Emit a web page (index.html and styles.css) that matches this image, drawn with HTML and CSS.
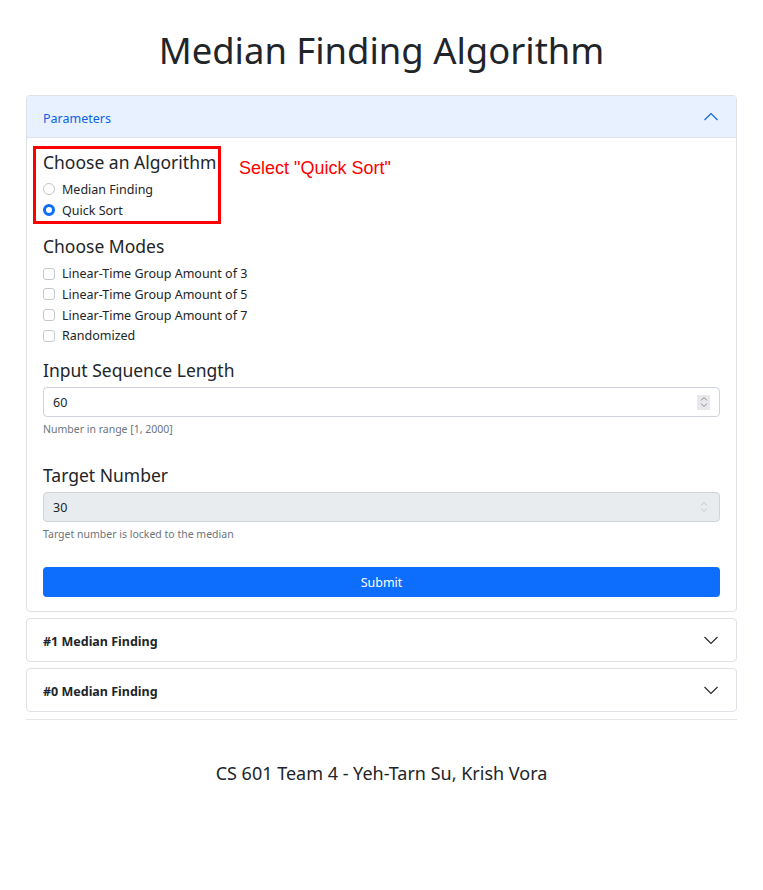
FILE: index.html
```html
<!DOCTYPE html>
<html lang="en">
<head>
<meta charset="utf-8">
<title>Median Finding Algorithm</title>
<link rel="stylesheet" href="styles.css">
</head>
<body>
<div class="container">
  <h1 class="title">Median Finding Algorithm</h1>

  <div class="acc-item">
    <div class="acc-header open">
      <span class="head-text">Parameters</span>
      <svg class="chev" width="16" height="16" viewBox="0 0 16 16"><path d="M1.5 11 L8 4.5 L14.5 11" fill="none" stroke="#0c63e4" stroke-width="1.1"/></svg>
    </div>
    <div class="acc-body">
      <div class="group highlight">
        <div class="group-title">Choose an Algorithm</div>
        <label class="check"><span class="radio"></span>Median Finding</label>
        <label class="check"><span class="radio on"></span>Quick Sort</label>
        <span class="note">Select "Quick Sort"</span>
      </div>

      <div class="group modes">
        <div class="group-title">Choose Modes</div>
        <label class="check"><span class="box"></span>Linear-Time Group Amount of 3</label>
        <label class="check"><span class="box"></span>Linear-Time Group Amount of 5</label>
        <label class="check"><span class="box"></span>Linear-Time Group Amount of 7</label>
        <label class="check"><span class="box"></span>Randomized</label>
      </div>

      <div class="group field">
        <div class="group-title">Input Sequence Length</div>
        <div class="input">
          <span>60</span>
          <span class="spin active"><svg width="8" height="12" viewBox="0 0 8 12"><path d="M1 4.5 L4 1.5 L7 4.5 M1 7.5 L4 10.5 L7 7.5" fill="none" stroke="#8a8a8a" stroke-width="1"/></svg></span>
        </div>
        <div class="help">Number in range [1, 2000]</div>
      </div>

      <div class="group field">
        <div class="group-title">Target Number</div>
        <div class="input disabled">
          <span>30</span>
          <span class="spin"><svg width="8" height="12" viewBox="0 0 8 12"><path d="M1 4.5 L4 1.5 L7 4.5 M1 7.5 L4 10.5 L7 7.5" fill="none" stroke="#c4c6c9" stroke-width="1"/></svg></span>
        </div>
        <div class="help">Target number is locked to the median</div>
      </div>

      <button class="submit" type="button">Submit</button>
    </div>
  </div>

  <div class="acc-item">
    <div class="acc-header">
      <span class="head-text bold">#1 Median Finding</span>
      <svg class="chev" width="16" height="16" viewBox="0 0 16 16"><path d="M1.5 5 L8 11.5 L14.5 5" fill="none" stroke="#212529" stroke-width="1.1"/></svg>
    </div>
  </div>

  <div class="acc-item">
    <div class="acc-header">
      <span class="head-text bold">#0 Median Finding</span>
      <svg class="chev" width="16" height="16" viewBox="0 0 16 16"><path d="M1.5 5 L8 11.5 L14.5 5" fill="none" stroke="#212529" stroke-width="1.1"/></svg>
    </div>
  </div>

  <div class="rule"></div>

  <footer class="footer">CS 601 Team 4 - Yeh-Tarn Su, Krish Vora</footer>
</div>
</body>
</html>
```

FILE: styles.css
```css
*, *::before, *::after { box-sizing: border-box; }
body {
  margin: 0;
  font-family: "Segoe UI", "Noto Sans", sans-serif;
  color: #212529;
  background: #fff;
}
.container { padding: 0 26px; }
.title {
  margin: 26px 0 21px;
  text-align: center;
  font-weight: 400;
  font-size: 36.4px;
  line-height: 48px;
}
.acc-item {
  border: 1px solid #dee2e6;
  border-radius: 4px;
  margin-bottom: 6px;
  overflow: hidden;
}
.acc-header {
  height: 42px;
  padding: 0 16px;
  display: flex;
  align-items: center;
  justify-content: space-between;
  font-size: 12.5px;
}
.head-text { padding-top: 3px; }
.acc-header.open {
  background: #e7f1ff;
  color: #0c63e4;
  border-bottom: 1px solid #dee2e6;
}
.acc-header .bold { font-weight: 700; }
.chev { margin-right: 1px; }
.acc-body { padding: 13px 16px 14px; }
.group { margin-bottom: 15px; }
.group.modes { margin-bottom: 13px; }
.group.highlight { position: relative; }
.group.highlight::after {
  content: "";
  position: absolute;
  left: -10px; top: -5px;
  width: 188px; height: 78px;
  border: 3px solid #ff0000;
}
.note {
  position: absolute;
  left: 196px; top: 7px;
  font-family: "Liberation Sans", Arial, sans-serif;
  font-size: 18px;
  color: #ff0000;
  white-space: nowrap;
}
.group-title {
  font-size: 17.5px;
  line-height: 23px;
  margin-bottom: 5px;
}
.check {
  display: flex;
  align-items: center;
  height: 20.7px;
  font-size: 12.5px;
}
.radio {
  width: 12px; height: 12px;
  border-radius: 50%;
  border: 1px solid #c4c8cc;
  margin-right: 7px;
  flex: none;
}
.radio.on {
  border: 3.5px solid #0d6efd;
  background: #fff;
}
.box {
  width: 12px; height: 12px;
  border-radius: 3px;
  border: 1px solid #c4c8cc;
  margin-right: 7px;
  flex: none;
}
.field { margin-bottom: 0; }
.field + .field { margin-top: 27px; }
.input {
  height: 30px;
  border: 1px solid #ced4da;
  border-radius: 4px;
  padding: 0 9px;
  display: flex;
  align-items: center;
  justify-content: space-between;
  font-size: 12.5px;
}
.input.disabled { background: #e9ecef; }
.spin {
  width: 13px; height: 15px;
  display: flex; align-items: center; justify-content: center;
}
.spin.active { background: #e9e9ed; }
.help {
  margin-top: 5px;
  font-size: 10.5px;
  line-height: 15px;
  color: #6c757d;
}
.submit {
  display: block;
  width: 100%;
  height: 30px;
  margin-top: 25px;
  border: 0;
  border-radius: 4px;
  background: #0d6efd;
  color: #fff;
  font-family: inherit;
  font-size: 12.5px;
}
.rule {
  border-top: 1px solid #e3e5e8;
  margin-top: 7px;
}
.footer {
  text-align: center;
  font-size: 18px;
  margin-top: 41px;
}
```
